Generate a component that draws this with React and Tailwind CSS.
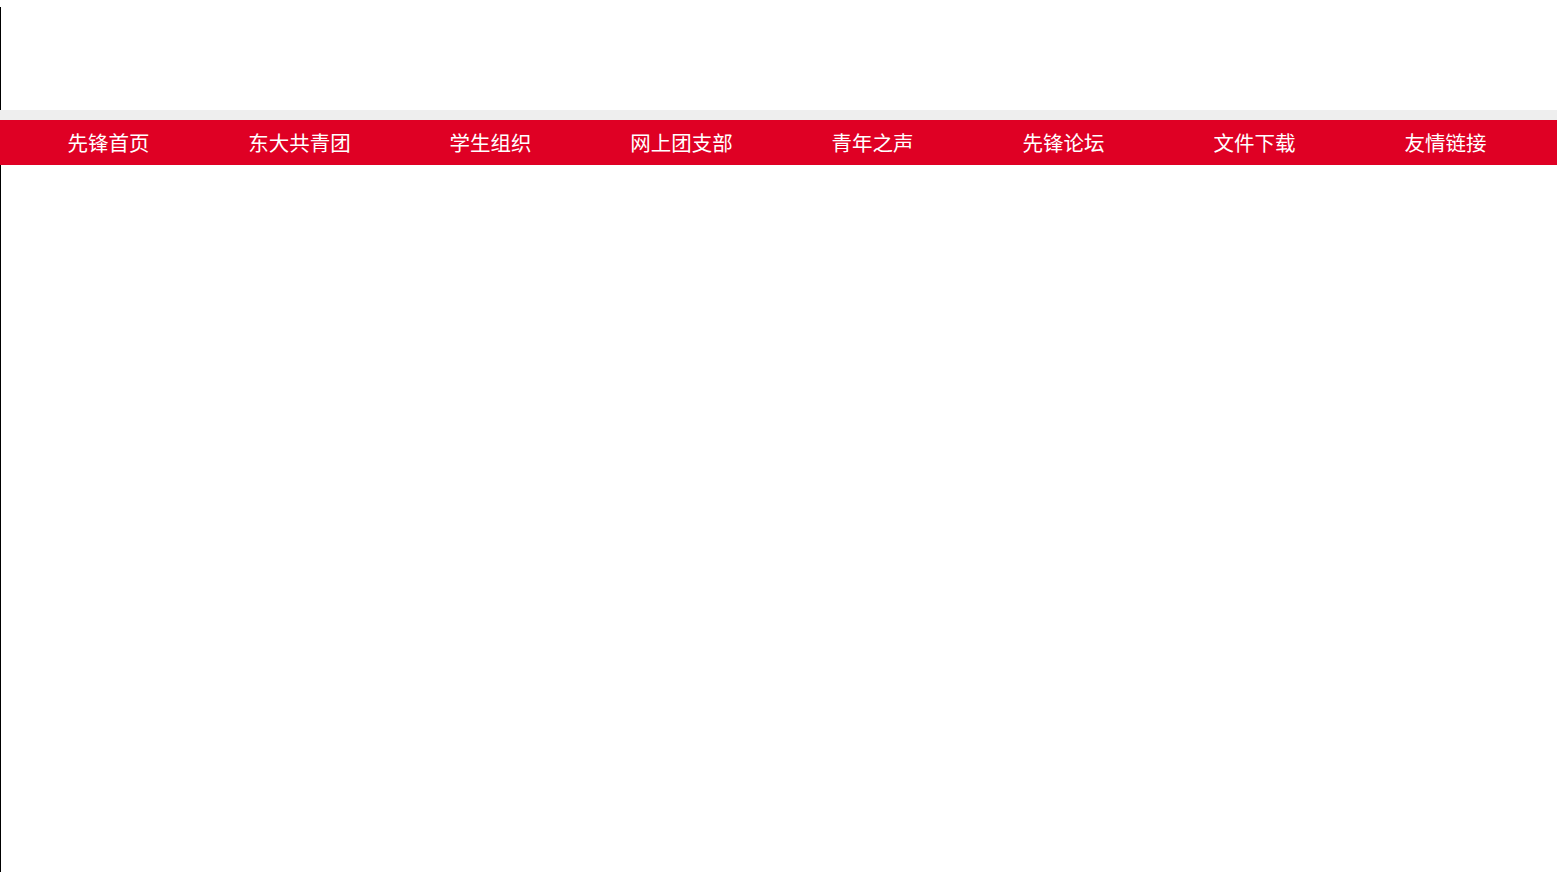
import React from "react";

const navItems = [
  "先锋首页",
  "东大共青团",
  "学生组织",
  "网上团支部",
  "青年之声",
  "先锋论坛",
  "文件下载",
  "友情链接",
];

const App = () => {
  return (
    <div
      className="min-h-[872px] bg-white"
      style={{ fontFamily: '"Microsoft YaHei", "Noto Sans CJK SC", sans-serif' }}
    >
      <div className="h-[110px] pt-[7px]">
        <div className="h-full w-px bg-black"></div>
      </div>
      <div className="h-[10px] bg-[#eeeeee]"></div>
      <nav className="h-[45px] bg-[#df0024]">
        <ul className="ml-[13px] grid h-full w-[1528px] grid-cols-8">
          {navItems.map((item) => (
            <li key={item} className="flex items-center justify-center">
              <a href="#" className="text-[20.5px] leading-none text-white">
                {item}
              </a>
            </li>
          ))}
        </ul>
      </nav>
      <div className="h-[707px] w-px bg-black"></div>
    </div>
  );
};

export default App;
